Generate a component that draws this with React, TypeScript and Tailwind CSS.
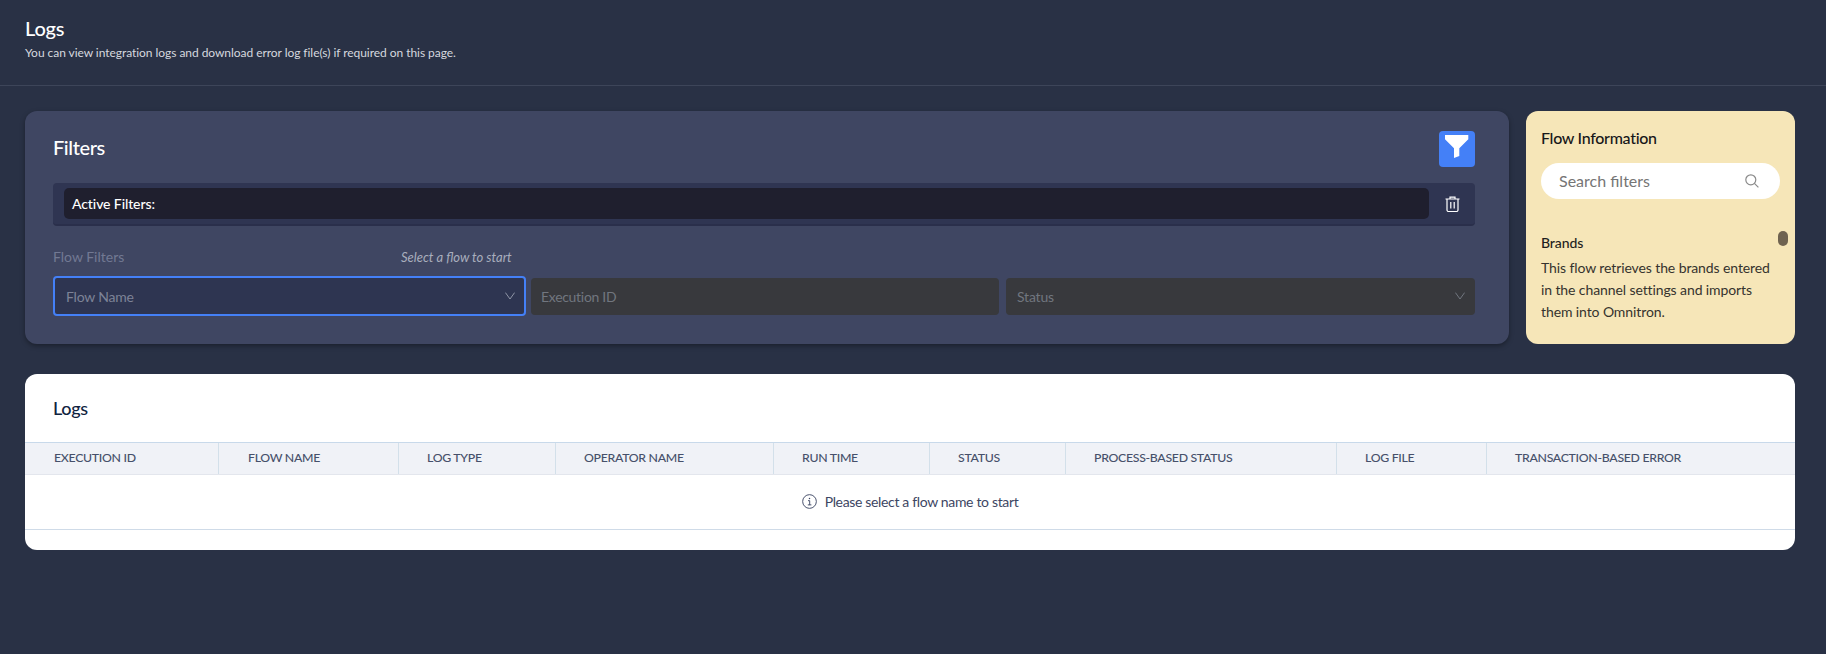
const columns = [
  { label: "EXECUTION ID", w: "w-[194px] pl-[29px]" },
  { label: "FLOW NAME", w: "w-[180px] pl-[29px]" },
  { label: "LOG TYPE", w: "w-[157px] pl-[28px]" },
  { label: "OPERATOR NAME", w: "w-[218px] pl-[28px]" },
  { label: "RUN TIME", w: "w-[156px] pl-[28px]" },
  { label: "STATUS", w: "w-[136px] pl-[28px]" },
  { label: "PROCESS-BASED STATUS", w: "w-[271px] pl-[28px]" },
  { label: "LOG FILE", w: "w-[150px] pl-[28px]" },
  { label: "TRANSACTION-BASED ERROR", w: "flex-1 pl-[28px]" },
];

function Chevron({ className }: { className: string }) {
  return (
    <svg width="10" height="8" viewBox="0 0 10 8" fill="none" stroke="currentColor" strokeWidth="1" className={className}>
      <path d="M0.4 0.6L5 7L9.6 0.6" />
    </svg>
  );
}

export default function App() {
  return (
    <div className="min-h-[654px] bg-[#293145] font-['Lato',sans-serif]">
      <header className="h-[86px] border-b border-[#3d4559] pl-[25px] pt-[15px]">
        <h1 className="text-[20px] leading-[26px] font-medium tracking-[-0.2px] text-white">Logs</h1>
        <p className="mt-[4px] text-[12px] leading-[16px] tracking-[-0.05px] text-[#d5d8df]">
          You can view integration logs and download error log file(s) if required on this page.
        </p>
      </header>

      <div className="ml-[25px] mr-[31px] mt-[25px] flex gap-[17px]">
        <section className="h-[233px] w-[1484px] rounded-[12px] bg-[#3f4662] pl-[28px] pr-[34px] pt-[20px] shadow-[0_2px_5px_rgba(0,0,0,0.35)]">
          <div className="flex h-[36px] items-center justify-between">
            <h2 className="-mt-[4px] text-[20px] font-medium tracking-[-0.4px] text-white">Filters</h2>
            <button className="flex h-[36px] w-[36px] items-center justify-center rounded-[4px] bg-[#4480f7]">
              <svg width="36" height="36" viewBox="0 0 36 36" fill="white">
                <path d="M6 4H29.3V8.3L20.3 17.3V25L15 27V17.3L6 8.3Z" />
              </svg>
            </button>
          </div>

          <div className="mt-[16px] flex h-[43px] items-center rounded-[4px] border-b-2 border-[#2a2f4b] bg-[#2f3552] pl-[11px]">
            <div className="flex h-[31px] flex-1 items-center rounded-[5px] bg-[#1f1f2e] pl-[8px] text-[14px] font-medium tracking-[-0.1px] text-white">
              Active Filters:
            </div>
            <div className="flex w-[46px] justify-center">
              <svg width="15" height="16" viewBox="0 0 15 16" fill="none" stroke="white" strokeWidth="1.2">
                <path d="M0.5 3H14.5M5 3V1.2H10V3M2 3V14a1.5 1.5 0 0 0 1.5 1.5H11.5A1.5 1.5 0 0 0 13 14V3" />
                <path d="M5.8 6V12.5M9.2 6V12.5" />
              </svg>
            </div>
          </div>

          <div className="mt-[21px] flex h-[20px] items-center text-[14px]">
            <span className="-mt-[2px] w-[348px] text-[#727993]">Flow Filters</span>
            <span className="mt-[2px] text-[13px] italic text-[#a9aebd]">Select a flow to start</span>
          </div>

          <div className="mt-[9px] flex items-center gap-[5px]">
            <div className="flex h-[40px] w-[473px] items-center justify-between rounded-[4px] border-2 border-[#4480f7] bg-[#2e3551] pl-[11px] pr-[9px] text-[14px] tracking-[-0.2px] text-[#7d8397]">
              Flow Name
              <Chevron className="text-[#8f95a6]" />
            </div>
            <div className="flex h-[37px] w-[468px] items-center rounded-[4px] bg-[#38393d] pl-[10px] text-[14px] tracking-[-0.3px] text-[#71767f]">
              Execution ID
            </div>
            <div className="ml-[2px] flex h-[37px] flex-1 items-center justify-between rounded-[4px] bg-[#38393d] pl-[11px] pr-[10px] text-[14px] tracking-[-0.2px] text-[#71767f]">
              Status
              <Chevron className="text-[#71767f]" />
            </div>
          </div>
        </section>

        <aside className="relative h-[233px] flex-1 rounded-[12px] bg-[#f6e6b8] pl-[15px] pr-[15px] pt-[16px]">
          <h3 className="text-[16px] leading-[22px] font-medium tracking-[-0.3px] text-[#17171a]">Flow Information</h3>
          <div className="mt-[14px] flex h-[36px] items-center justify-between rounded-full bg-white pl-[18px] pr-[21px] text-[16px] text-[#757575]">
            Search filters
            <svg width="14" height="14" viewBox="0 0 14 14" fill="none" stroke="#8a8a8a" strokeWidth="1.2">
              <circle cx="5.8" cy="5.8" r="5" />
              <path d="M9.4 9.4L13.4 13.4" />
            </svg>
          </div>
          <div className="mt-[34px] pr-[5px]">
            <h4 className="text-[14px] leading-[20px] font-medium tracking-[-0.1px] text-[#1e1e20]">Brands</h4>
            <p className="mt-[4px] text-[14px] leading-[22px] tracking-[-0.1px] text-[#35332e]">
              This flow retrieves the brands entered in the channel settings and imports them into Omnitron.
            </p>
          </div>
          <div className="absolute right-[7px] top-[120px] h-[15px] w-[10px] rounded-[5px] bg-[#6f6350]" />
        </aside>
      </div>

      <section className="ml-[25px] mr-[31px] mt-[30px] h-[176px] overflow-hidden rounded-[12px] bg-white">
        <h2 className="flex h-[68px] items-center pl-[28px] text-[18px] font-medium tracking-[-0.3px] text-[#10233f]">Logs</h2>
        <div className="flex h-[33px] border-b border-t border-b-[#e3e6ed] border-t-[#c8d9ea] bg-[#f0f2f7]">
          {columns.map((c) => (
            <div
              key={c.label}
              className={`${c.w} flex items-center border-r border-[#d3e0ea] text-[12.3px] font-medium tracking-[-0.3px] text-[#46506a] last:border-r-0`}
            >
              {c.label}
            </div>
          ))}
        </div>
        <div className="flex h-[55px] items-center justify-center gap-[8px] border-b border-[#cfdbe8] pb-[2px] text-[14px] tracking-[-0.34px] text-[#3d4663]">
          <svg width="15" height="15" viewBox="0 0 16 16" fill="none" stroke="currentColor">
            <circle cx="8" cy="8" r="7.3" strokeWidth="1" />
            <path d="M6.4 7.1H8.2V11.6M6.2 11.6H10" strokeWidth="1" />
            <circle cx="8" cy="4.7" r="0.8" fill="currentColor" stroke="none" />
          </svg>
          Please select a flow name to start
        </div>
      </section>
    </div>
  );
}
